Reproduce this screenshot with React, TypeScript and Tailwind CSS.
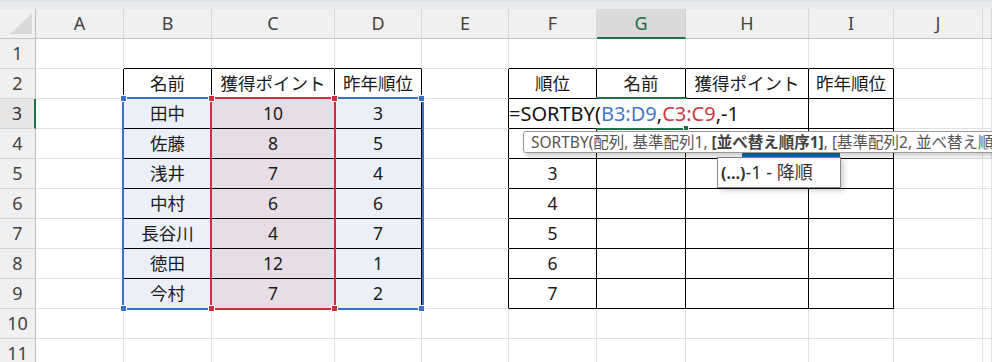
import React from "react";

const LETTERS = ["A", "B", "C", "D", "E", "F", "G", "H", "I", "J", ""];
const NAMES = ["田中", "佐藤", "浅井", "中村", "長谷川", "徳田", "今村"];
const PTS = ["10", "8", "7", "6", "4", "12", "7"];
const LAST = ["3", "5", "4", "6", "7", "1", "2"];

const inT1 = (r: number, c: number) => r >= 2 && r <= 9 && c >= 1 && c <= 3;
const inT2 = (r: number, c: number) => r >= 2 && r <= 9 && c >= 5 && c <= 8;
const inT = (r: number, c: number) => inT1(r, c) || inT2(r, c);

function cellText(r: number, c: number): string {
  if (r === 2) {
    const h: Record<number, string> = {
      1: "名前",
      2: "獲得ポイント",
      3: "昨年順位",
      5: "順位",
      6: "名前",
      7: "獲得ポイント",
      8: "昨年順位",
    };
    return h[c] ?? "";
  }
  if (r >= 3 && r <= 9) {
    const i = r - 3;
    if (c === 1) return NAMES[i];
    if (c === 2) return PTS[i];
    if (c === 3) return LAST[i];
    if (c === 5 && r >= 4) return String(r - 2);
  }
  return "";
}

function Cell({ r, c }: { r: number; c: number }) {
  const rightBlack = inT(r, c) || inT(r, c + 1);
  const bottomBlack = inT(r, c) || inT(r + 1, c);
  const fillBlue = r >= 3 && r <= 9 && (c === 1 || c === 3);
  const fillPink = r >= 3 && r <= 9 && c === 2;
  return (
    <div
      className={[
        "h-[30px] border-r border-b flex items-center justify-center whitespace-nowrap text-[17.5px] text-[#1a1a1a]",
        rightBlack ? "border-r-black" : "border-r-[#e1e1e1]",
        bottomBlack ? "border-b-black" : "border-b-[#e1e1e1]",
        fillBlue ? "bg-[#eaeff8]" : fillPink ? "bg-[#e8dde6]" : "bg-white",
      ].join(" ")}
    >
      {cellText(r, c)}
    </div>
  );
}

function Handle({ x, y, color }: { x: number; y: number; color: "blue" | "red" }) {
  const cls = color === "blue" ? "bg-[#3a70c8]" : "bg-[#c7323d]";
  return (
    <div
      className={`absolute w-[7px] h-[7px] border border-white ${cls}`}
      style={{ left: x - 3, top: y - 3 }}
    />
  );
}

export default function App() {
  const rows = Array.from({ length: 11 }, (_, i) => i + 1);
  const cols = Array.from({ length: 11 }, (_, i) => i);
  return (
    <div
      className="relative w-[992px] h-[362px] overflow-hidden bg-white"
      style={{ fontFamily: '"Noto Sans", "Noto Sans CJK JP", sans-serif' }}
    >
      {/* top strip */}
      <div className="h-[9px] bg-[#e8ebee] border-t-2 border-t-[#dde1e5]" />

      <div className="grid grid-cols-[36px_88px_88px_123px_87px_87px_88px_89px_123px_85px_89px_1fr]">
        {/* corner */}
        <div className="h-[30px] bg-[#f0f0f0] border-r border-r-[#bdbdbd] border-b border-b-[#c4c4c4] relative">
          <svg width="36" height="29" className="absolute left-0 top-0">
            <polygon points="10,25 32,25 32,4" fill="#d9d9d9" />
          </svg>
        </div>
        {cols.map((c) =>
          c === 6 ? (
            <div
              key={`h${c}`}
              className="h-[30px] bg-[#dadada] border-r border-r-[#d0d0d0] border-b-2 border-b-[#1f7145] flex items-center justify-center text-[18px] text-[#1d6b40]"
            >
              {LETTERS[c]}
            </div>
          ) : (
            <div
              key={`h${c}`}
              className="h-[30px] bg-[#f0f0f0] border-r border-r-[#d8d8d8] border-b border-b-[#c4c4c4] flex items-center justify-center text-[18px] text-[#444]"
            >
              {LETTERS[c]}
            </div>
          )
        )}

        {rows.map((r) => (
          <React.Fragment key={`r${r}`}>
            {r === 3 ? (
              <div className="h-[30px] bg-[#e6e6e6] border-r-2 border-r-[#1f7145] border-b border-b-[#d4d4d4] flex items-center justify-center text-[18px] text-[#333]">
                {r}
              </div>
            ) : (
              <div className="h-[30px] bg-[#f0f0f0] border-r border-r-[#bdbdbd] border-b border-b-[#d4d4d4] flex items-center justify-center text-[18px] text-[#444]">
                {r}
              </div>
            )}
            {cols.map((c) => (
              <Cell key={`c${r}-${c}`} r={r} c={c} />
            ))}
          </React.Fragment>
        ))}
      </div>

      {/* range highlights */}
      <div className="absolute left-[122px] top-[97px] w-[302px] h-[213px] border-2 border-[#3a70c8]" />
      <div className="absolute left-[210px] top-[97px] w-[126px] h-[213px] border-2 border-[#c7323d]" />
      <Handle x={123} y={98} color="blue" />
      <Handle x={421} y={98} color="blue" />
      <Handle x={123} y={308} color="blue" />
      <Handle x={421} y={308} color="blue" />
      <Handle x={211} y={98} color="red" />
      <Handle x={334} y={98} color="red" />
      <Handle x={211} y={308} color="red" />
      <Handle x={334} y={308} color="red" />

      {/* active cell G3 */}
      <div className="absolute left-[596px] top-[97px] w-[91px] h-[33px] border-2 border-[#1f7145]" />

      {/* in-cell editor */}
      <div className="absolute left-[509px] top-[99px] w-[219px] h-[29px] bg-white flex items-center whitespace-nowrap text-[20px] text-[#111]">
        <span>=SORTBY(</span>
        <span className="text-[#4377cc]">B3:D9</span>
        <span>,</span>
        <span className="text-[#d0393f]">C3:C9</span>
        <span>,-1</span>
        <span className="inline-block w-[1px] h-[30px] bg-black ml-[1px]" />
      </div>
      <div className="absolute left-[683px] top-[125px] w-[6px] h-[6px] bg-[#1f7145] border border-white" />

      {/* dropdown list */}
      <div className="absolute left-[742px] top-[152px] w-[98px] h-[6px] bg-[#0f6cbd]" />
      <div className="absolute left-[717px] top-[157px] w-[124px] h-[31px] bg-white border border-[#8a8a8a] shadow-[3px_3px_5px_rgba(0,0,0,0.18)] flex items-center pl-[3px] whitespace-nowrap text-[#333]">
        <span className="text-[16px] font-bold">(…)</span>
        <span className="text-[18px]">-1 - 降順</span>
      </div>

      {/* function tooltip */}
      <div className="absolute left-[523px] top-[131px] w-[600px] h-[22px] bg-white border border-[#9a9a9a] rounded-[3px] shadow-[2px_3px_5px_rgba(0,0,0,0.2)] pl-[7px] whitespace-nowrap text-[15.5px] leading-[20px] text-[#555]">
        SORTBY(配列, 基準配列1, <span className="font-bold text-[#444]">[並べ替え順序1]</span>, [基準配列2, 並べ替え順序2], ...)
      </div>
    </div>
  );
}
